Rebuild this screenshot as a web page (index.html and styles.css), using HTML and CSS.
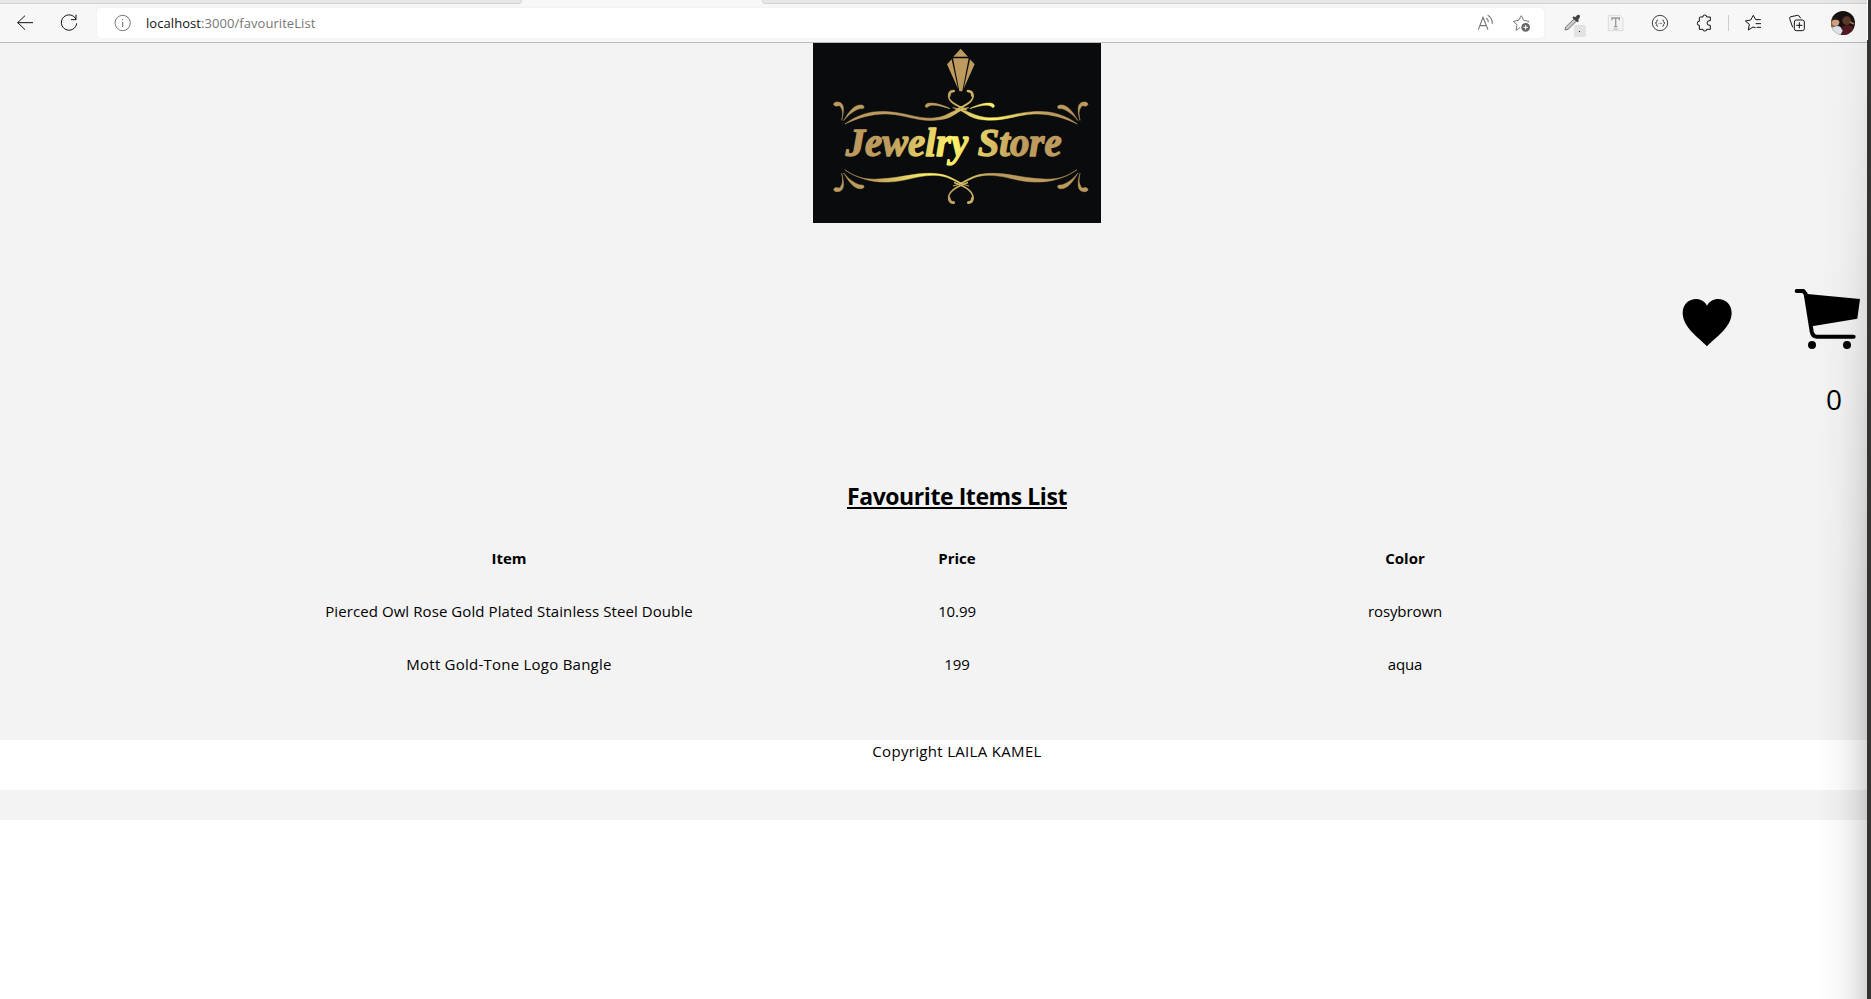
FILE: index.html
```html
<!DOCTYPE html>
<html lang="en">
<head>
<meta charset="utf-8">
<title>Favourite Items List</title>
<link rel="stylesheet" href="styles.css">
</head>
<body>
<div class="window">
  <div class="tabs"><div class="tab tab-left"></div><div class="tab tab-right"></div></div>
  <div class="toolbar">
    <svg class="back" viewBox="48 9 54 117" width="18" height="39"><path d="M99 68H53M75 47L53 68L75 89" fill="none" stroke="#111" stroke-width="3"/></svg>
    <svg class="reload" viewBox="180 9 54 117" width="18" height="39"><path d="M228 58A23 23 0 1 0 230 70M228 44V59H213" fill="none" stroke="#111" stroke-width="3"/></svg>
    <div class="address">
      <svg class="info" viewBox="343 24 54 90" width="18" height="30"><circle cx="369" cy="69" r="23" fill="none" stroke="#777" stroke-width="3"/><path d="M369 66V81M369 57V61" stroke="#777" stroke-width="3.4"/></svg>
      <span class="url"><span class="host">localhost</span>:3000/favouriteList</span>
      <svg class="read" viewBox="51 24 51 90" width="17" height="30" fill="none" stroke="#777" stroke-width="3.4"><path d="M55 89L69 52L84 89M60 77H79M79 54Q85 58 85 67M83 46Q97 53 97 71"/></svg>
      <svg class="addfav" viewBox="156 24 57 90" width="19" height="30"><path d="M180 83L168 91L171 74L160 64L176 61L184 47L191 61L207 64L203 68" fill="none" stroke="#777" stroke-width="3" stroke-linejoin="round"/><circle cx="197" cy="82" r="13" fill="#666"/><path d="M190 82H204M197 75V89" stroke="#fff" stroke-width="3"/></svg>
    </div>
    <svg class="picker" viewBox="309 9 72 117" width="24" height="39"><path d="M342 57L317 81L315 90L324 88L349 64Z" fill="#c9c9c9" stroke="#777" stroke-width="3"/><path d="M337 53L341 49L346 52L351 46Q359 42 360 49Q361 53 354 59L357 63L352 67Z" fill="#444"/><rect x="342" y="75" width="36" height="36" rx="5" fill="#e2e2e2"/><rect x="357" y="93" width="3" height="3" fill="#111"/></svg>
    <svg class="tee" viewBox="442 9 51 117" width="17" height="39"><path d="M446 46H481L490 54V92H446Z" fill="#f2f2f2" stroke="#ddd" stroke-width="3"/><path d="M457 61V54H479V61M468 54V80M463 80H473" fill="none" stroke="#999" stroke-width="4"/><path d="M461 87H475" stroke="#999" stroke-width="2"/></svg>
    <svg class="json" viewBox="573 9 54 117" width="18" height="39" fill="none" stroke="#444" stroke-width="3"><circle cx="600" cy="69" r="23"/><path d="M594 60Q589 60 590 65Q590 69 586 69Q590 70 590 74Q589 79 594 79M607 60Q612 60 611 65Q611 69 615 69Q611 70 611 74Q612 79 607 79"/><path d="M596 70H598M600 70H602M604 70H606"/></svg>
    <svg class="puzzle" viewBox="708 9 51 117" width="17" height="39"><path d="M721 51H729Q728 45 734 45Q741 45 740 51H751V62Q741 61 741 69Q741 77 751 76V88H740Q741 93 734 93Q728 93 729 88H718V76Q712 77 712 70Q712 63 718 64V54Q718 51 721 51Z" fill="none" stroke="#111" stroke-width="3" stroke-linejoin="round"/></svg>
    <span class="divider"></span>
    <svg class="favs" viewBox="852 9 57 117" width="19" height="39"><path d="M886 83L879 81L865 90L868 73L856 63L872 60L880 46L887 59L901 59M888 71H902M891 82H902" fill="none" stroke="#111" stroke-width="3" stroke-linejoin="round" stroke-linecap="round"/></svg>
    <svg class="collect" viewBox="984 9 54 117" width="18" height="39" fill="none" stroke="#111" stroke-width="3"><path d="M998 82L989 56Q988 51 993 50L1013 46Q1018 46 1022 55"/><rect x="1003" y="60" width="30" height="32" rx="6"/><path d="M1009 76H1027M1018 67V85"/></svg>
    <svg class="avatar" viewBox="1110 9 78 117" width="26" height="39"><defs><clipPath id="face"><circle cx="1149" cy="69" r="36"/></clipPath></defs><g clip-path="url(#face)"><path d="M1110 30H1188V108H1110Z" fill="#17110f"/><path d="M1110 55H1122V90H1110Z" fill="#8c6440"/><circle cx="1160" cy="62" r="13" fill="#5b382b"/><path d="M1142 84Q1160 67 1181 82L1178 106H1145Z" fill="#521a20"/><circle cx="1127" cy="67" r="11" fill="#d0a084"/><path d="M1115 62Q1116 50 1128 51Q1139 53 1138 62Q1127 57 1115 62Z" fill="#241a18"/><path d="M1115 84Q1128 75 1141 80L1148 92L1140 108H1120Z" fill="#dde2eb"/><path d="M1170 66L1182 72" stroke="#ad7645" stroke-width="5"/></g></svg>
  </div>
  <div class="page">
    <header class="brand">
      <svg class="logo" viewBox="24 24 864 540" width="288" height="180">
        <defs>
          <linearGradient id="top" gradientUnits="userSpaceOnUse" x1="85" x2="850" y1="0" y2="0"><stop offset="0" stop-color="#bd9b5e"/><stop offset=".4" stop-color="#bd9b5e"/><stop offset=".62" stop-color="#fff36c"/><stop offset=".84" stop-color="#bd9b5e"/></linearGradient>
          <linearGradient id="low" gradientUnits="userSpaceOnUse" x1="85" x2="850" y1="0" y2="0"><stop offset="0" stop-color="#bd9b5e"/><stop offset=".15" stop-color="#bd9b5e"/><stop offset=".38" stop-color="#fff36c"/><stop offset=".65" stop-color="#bd9b5e"/></linearGradient>
          <linearGradient id="word" gradientUnits="userSpaceOnUse" x1="260" x2="640" y1="280" y2="370"><stop offset="0" stop-color="#bd9b5e"/><stop offset=".48" stop-color="#fff36c"/><stop offset=".65" stop-color="#e8d468"/><stop offset="1" stop-color="#bd9b5e"/></linearGradient>
          <linearGradient id="curl" gradientUnits="userSpaceOnUse" x1="430" x2="505" y1="0" y2="0"><stop offset="0" stop-color="#bd9b5e"/><stop offset=".55" stop-color="#d9bf66"/><stop offset="1" stop-color="#c9aa60"/></linearGradient>
          <g id="corner"><path d="M110 256Q117 230 107 216C103 208 98 215 91 213C82 209 86 200 99 201C121 203 117 230 110 256Z"/><path d="M116 257C133 228 149 208 169 210C180 211 179 221 171 221C163 220 160 223 152 226Q132 236 116 257Z"/></g>
        </defs>
        <rect x="24" y="24" width="864" height="540" fill="#090b0c"/>
        <g fill="#bd9b5e"><path d="M467 41L489 65H445Z"/><path d="M444 70H491L472 169H463Z"/><path d="M440 73L426 88L459 161Z"/><path d="M495 73L509 88L476 161Z"/></g>
        <g class="ribbon" fill="url(#top)" stroke="url(#top)">
          <path d="M120 267C165 234 205 227 250 230C310 234 350 257 400 247C438 239 440 222 491 218C456 225 447 250 405 254C345 264 305 239 248 237C205 235 160 248 120 267Z"/>
          <path d="M817 267C772 234 730 227 685 230C625 234 585 254 538 247C497 239 482 222 443 218C478 225 490 251 532 254C592 262 632 239 687 237C732 235 777 248 817 267Z"/>
          <path d="M435 221C410 208 384 202 369 205C356 209 361 222 368 216C379 205 407 213 435 221ZM494 221C519 208 545 202 560 205C573 209 568 222 561 216C550 205 522 213 494 221Z"/>
          <use href="#corner"/><use href="#corner" transform="matrix(-1 0 0 1 935 0)"/>
        </g>
        <g class="ribbon" fill="url(#low)" stroke="url(#low)">
          <path d="M119 404C164 437 205 434 248 430C305 425 350 408 410 418C443 424 464 447 492 453C455 447 438 425 403 422C345 416 305 440 250 441C205 443 157 431 119 404Z"/>
          <path d="M816 404C771 437 731 434 688 430C631 425 586 408 526 418C493 424 472 447 444 453C481 447 498 425 533 422C591 416 631 440 686 441C731 443 779 431 816 404Z"/>
          <use href="#corner" transform="matrix(1 0 0 -1 0 671)"/><use href="#corner" transform="matrix(-1 0 0 -1 935 671)"/>
        </g>
        <g fill="none" stroke="url(#curl)" stroke-linecap="round"><path d="M483 224C449 210 431 199 431 184Q431 168 444 169M453 224C487 210 504 199 504 184Q504 168 490 169" stroke-width="5"/><path d="M433 182Q433 168 446 168M502 182Q502 168 489 168" stroke-width="8"/><path d="M487 443C449 456 431 472 431 488Q432 502 444 502M449 443C487 456 504 472 504 488Q503 502 491 502" stroke-width="5"/><path d="M433 490Q434 503 446 503M502 490Q502 503 490 503" stroke-width="8"/></g>
        <text class="wordmark" y="364" fill="url(#word)" stroke="url(#word)"><tspan x="122" textLength="368" lengthAdjust="spacingAndGlyphs">Jewelry</tspan> <tspan x="518" textLength="252" lengthAdjust="spacingAndGlyphs">Store</tspan></text>
      </svg>
    </header>
    <div class="actions">
      <svg class="heart" viewBox="66 84 153 150" width="51" height="50"><path d="M141 229C119 205 69 174 68 129C68 81 126 74 141 107C156 74 215 81 215 129C214 174 163 205 141 229Z"/></svg>
      <div class="cart">
        <svg viewBox="402 54 201 186" width="67" height="62"><path d="M410 63H430L437 72L455 184Q458 200 471 200H581" fill="none" stroke="#000" stroke-width="12" stroke-linecap="round" stroke-linejoin="round"/><path d="M434 71L600 87L592 146L456 169Z"/><circle cx="456" cy="225" r="12"/><circle cx="561" cy="225" r="12"/></svg>
        <span class="count">0</span>
      </div>
    </div>
    <h1 class="title"><span>Favourite Items List</span></h1>
    <div class="grid">
      <span class="th">Item</span><span class="th">Price</span><span class="th">Color</span>
      <span class="name">Pierced Owl Rose Gold Plated Stainless Steel Double</span><span class="value">10.99</span><span class="value">rosybrown</span>
      <span class="name name-short">Mott Gold-Tone Logo Bangle</span><span class="value">199</span><span class="value">aqua</span>
    </div>
    <footer class="footer">Copyright LAILA KAMEL</footer>
  </div>
  <div class="edge-shadow"></div>
  <div class="edge"></div>
</div>
</body>
</html>
```
FILE: styles.css
```css
* { box-sizing: border-box; }
body { margin: 0; background: #fff; color: #000; font-family: "Open Sans", "Noto Sans", sans-serif; }
.window { position: relative; width: 1871px; height: 999px; overflow: hidden; }
svg { display: block; flex: none; }
.tabs { display: flex; justify-content: space-between; height: 4px; margin-bottom: -1px; background: #f7f7f7; }
.tab { background: #e7e7e7; border-bottom: 1px solid #d2d2d2; }
.tab-left { width: 522px; border-right: 1px solid #d2d2d2; border-bottom-right-radius: 4px; }
.tab-right { width: 1109px; border-left: 1px solid #d2d2d2; border-bottom-left-radius: 4px; }
.toolbar { display: flex; height: 40px; padding-left: 16px; border-bottom: 1px solid #bcbcbc; background: linear-gradient(#f7f7f700 1px, #f7f7f7 1px); }
.reload { margin-left: 26px; }
.address { display: flex; flex: none; width: 1447px; height: 30px; margin: 5px 0 0 19px; border-radius: 4px; background: #fff; box-shadow: 0 0 3px #0000000d; }
.info { margin-left: 17px; }
.url { width: max-content; margin: 0 auto 0 14px; color: #767676; font-size: 13px; line-height: 30px; letter-spacing: .06px; white-space: nowrap; }
.host { color: #111; }
.read { margin-right: 18px; }
.addfav { margin-right: 13px; }
.picker { margin-left: 19px; }
.tee { margin-left: 20px; }
.json { margin-left: 27px; }
.puzzle { margin-left: 27px; }
.divider { width: 1px; height: 16px; margin: 12px 15px 0 15px; background: #ccc; }
.collect { margin-left: 25px; }
.avatar { margin-left: 24px; }
.page { display: flex; flex-direction: column; width: 1914px; height: 777px; background: #f3f3f3; }
.brand { display: flex; justify-content: center; height: 180px; }
.ribbon { stroke-width: 1.5px; }
.wordmark { font: italic bold 120px "Liberation Serif", serif; stroke-width: 4px; stroke-linejoin: round; }
.actions { display: flex; justify-content: flex-end; height: 257px; padding: 65px 53px 0 0; }
.heart { margin: 10px 61px 0 0; }
.cart { display: flex; flex-direction: column; width: 67px; }
.count { padding: 29px 19px 0 0; font-size: 28px; line-height: 40px; text-align: right; }
.title { margin: 0; font-size: 23px; line-height: 32px; letter-spacing: -.43px; text-align: center; }
.title span { text-decoration: underline; text-decoration-thickness: 2px; text-underline-offset: 2px; }
.grid { display: grid; grid-template-columns: repeat(3, 448px); justify-content: center; margin-top: 20px; font-size: 15px; line-height: 53px; text-align: center; }
.th { font-weight: 700; }
.name { letter-spacing: .08px; }
.name-short { letter-spacing: .24px; }
.value { letter-spacing: -.1px; }
.footer { height: 50px; margin-top: 49px; background: #fff; font-size: 15px; line-height: 22px; letter-spacing: .32px; text-align: center; }
.edge-shadow { position: absolute; top: 0; right: 4px; width: 50px; height: 999px; background: linear-gradient(90deg, #0000, #00000007 45%, #00000015 75%, #00000028); -webkit-mask-image: linear-gradient(#0003, #0006 20%, #000 60%); mask-image: linear-gradient(#0003, #0006 20%, #000 60%); }
.edge { position: absolute; top: 0; right: 0; width: 4px; height: 999px; background: #343331; }
.edge::before { content: ""; display: block; width: 1px; height: 40px; background: #fff; }
```
